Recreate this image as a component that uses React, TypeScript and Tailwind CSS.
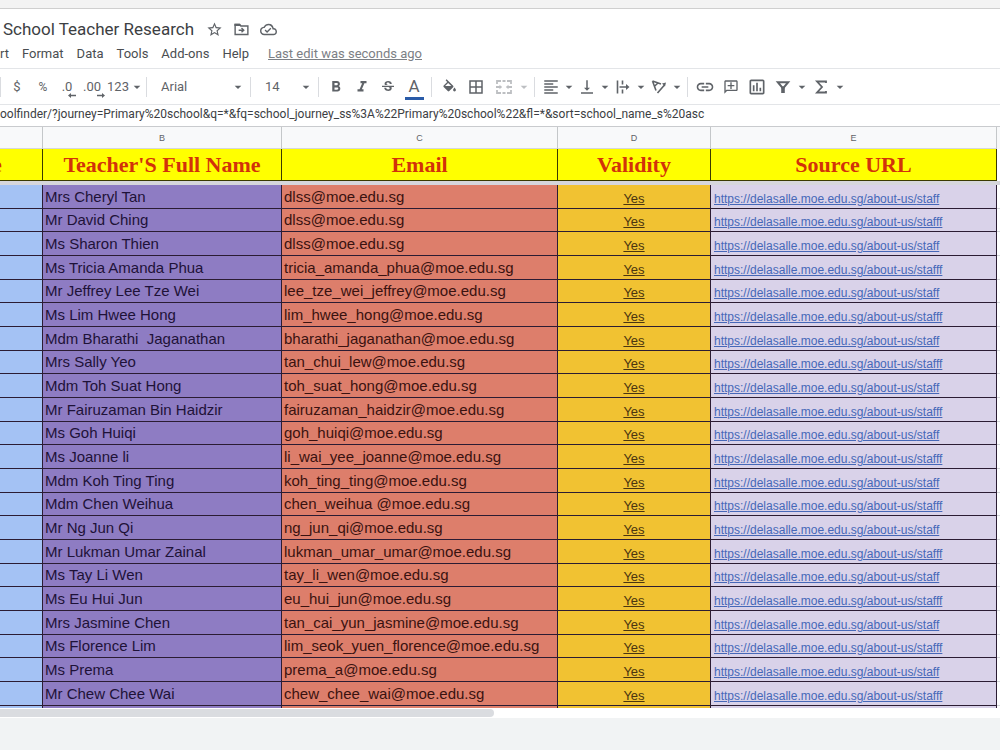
import type { ReactNode } from "react";
import {
  MdArrowDropDown,
  MdBorderAll,
  MdFormatAlignLeft,
  MdFormatBold,
  MdFormatItalic,
  MdInsertLink,
  MdOutlineAddComment,
  MdOutlineCloudDone,
  MdOutlineInsertChart,
  MdStarBorder,
  MdStrikethroughS,
  MdVerticalAlignBottom,
} from "react-icons/md";

const teachers: [string, string][] = [
  ["Mrs Cheryl Tan", "dlss@moe.edu.sg"],
  ["Mr David Ching", "dlss@moe.edu.sg"],
  ["Ms Sharon Thien", "dlss@moe.edu.sg"],
  ["Ms Tricia Amanda Phua", "tricia_amanda_phua@moe.edu.sg"],
  ["Mr Jeffrey Lee Tze Wei", "lee_tze_wei_jeffrey@moe.edu.sg"],
  ["Ms Lim Hwee Hong", "lim_hwee_hong@moe.edu.sg"],
  ["Mdm Bharathi  Jaganathan", "bharathi_jaganathan@moe.edu.sg"],
  ["Mrs Sally Yeo", "tan_chui_lew@moe.edu.sg"],
  ["Mdm Toh Suat Hong", "toh_suat_hong@moe.edu.sg"],
  ["Mr Fairuzaman Bin Haidzir", "fairuzaman_haidzir@moe.edu.sg"],
  ["Ms Goh Huiqi", "goh_huiqi@moe.edu.sg"],
  ["Ms Joanne li", "li_wai_yee_joanne@moe.edu.sg"],
  ["Mdm Koh Ting Ting", "koh_ting_ting@moe.edu.sg"],
  ["Mdm Chen Weihua", "chen_weihua @moe.edu.sg"],
  ["Mr Ng Jun Qi", "ng_jun_qi@moe.edu.sg"],
  ["Mr Lukman Umar Zainal", "lukman_umar_umar@moe.edu.sg"],
  ["Ms Tay Li Wen", "tay_li_wen@moe.edu.sg"],
  ["Ms Eu Hui Jun", "eu_hui_jun@moe.edu.sg"],
  ["Mrs Jasmine Chen", "tan_cai_yun_jasmine@moe.edu.sg"],
  ["Ms Florence Lim", "lim_seok_yuen_florence@moe.edu.sg"],
  ["Ms Prema", "prema_a@moe.edu.sg"],
  ["Mr Chew Chee Wai", "chew_chee_wai@moe.edu.sg"],
];

const menus = ["rt", "Format", "Data", "Tools", "Add-ons", "Help"];

function Tool({ label, width = "w-[26px]", children }: { label: string; width?: string; children: ReactNode }) {
  return (
    <button type="button" aria-label={label} className={`flex h-7 shrink-0 items-center justify-center ${width}`}>
      {children}
    </button>
  );
}

function Caret() {
  return <MdArrowDropDown className="size-4 shrink-0" />;
}

function More({ label }: { label: string }) {
  return (
    <Tool label={label} width="w-3">
      <Caret />
    </Tool>
  );
}

function Divider() {
  return <div className="mx-1 h-5 w-px shrink-0 bg-[#dadce0]" />;
}

function FolderMoveIcon() {
  return (
    <svg viewBox="0 0 24 24" className="size-[17px]" fill="none" stroke="currentColor" strokeWidth="2">
      <path d="M3 5h6l2 2h10v12H3z" />
      <path d="M2 4h8l2 3H2z" fill="currentColor" stroke="none" />
      <path d="M8 13h7M12 10l3.200 3-3.200 3" />
    </svg>
  );
}

function FillIcon() {
  return (
    <svg viewBox="0 0 18 18" className="size-4" fill="currentColor">
      <path d="M5.200 1.300l1.100-1.100 7.400 7.400c.5.500.5 1.100 0 1.600l-4.400 4.400c-.5.500-1.200.5-1.700 0L3 9c-.5-.5-.5-1.100 0-1.600l4-4zM8 4.500L4.600 8h7z" />
      <path d="M15.200 9.500s-1.600 1.900-1.600 3a1.600 1.600 0 0 0 3.200 0c0-1.100-1.600-3-1.600-3z" />
    </svg>
  );
}

function MergeIcon() {
  return (
    <svg viewBox="0 0 18 18" className="size-[18px]" fill="none" stroke="currentColor" strokeWidth="1.800">
      <path d="M2 6V3h4M7.500 3h3M12 3h4v3M2 12v3h4M7.500 15h3M12 15h4v-3M1 9h5M17 9h-5" />
      <path d="M4.500 6.800L7.200 9l-2.700 2.200zM13.500 6.800L10.800 9l2.700 2.200z" fill="currentColor" stroke="none" />
    </svg>
  );
}

function WrapIcon() {
  return (
    <svg viewBox="0 0 18 18" className="size-[18px]" fill="none" stroke="currentColor" strokeWidth="1.600">
      <path d="M3.500 2.500v13M8.500 2.500v4M8.500 11.500v4M5.500 9h7.500" />
      <path d="M12 6l3.500 3-3.500 3z" fill="currentColor" stroke="none" />
    </svg>
  );
}

function RotateIcon() {
  return (
    <svg viewBox="0 0 18 18" className="size-[18px]" fill="none" stroke="currentColor" strokeWidth="1.600">
      <path d="M2.500 3l3.500 9.500M2.500 3l8.500 3M4.200 8.500L8 5M7.500 15l7-8" />
      <path d="M12 5.500l4-1-1 4z" fill="currentColor" stroke="none" />
    </svg>
  );
}

function FilterIcon() {
  return (
    <svg viewBox="0 0 18 18" className="size-[18px]" fill="none" stroke="currentColor" strokeWidth="2">
      <path d="M3.800 4.200h10.400L9 10.500z" />
      <path d="M7.200 8.500h3.600V15H7.200z" fill="currentColor" stroke="none" />
    </svg>
  );
}

function SigmaIcon() {
  return (
    <svg viewBox="0 0 18 18" className="size-[18px]" fill="none" stroke="currentColor" strokeWidth="1.800">
      <path d="M14 5V3.500H5L10 9l-5 5.500h9V13" />
    </svg>
  );
}

function DecimalIcon({ digits, direction }: { digits: string; direction: "left" | "right" }) {
  return (
    <span className="flex flex-col items-end pt-1 text-[13px] leading-[14px]">
      {digits}
      <svg viewBox="0 0 8 5" className="-mt-px -mr-1 h-[5px] w-2" fill="currentColor">
        {direction === "left" ? (
          <path d="M0 2.500L3 0v1.800h5v1.400H3V5z" />
        ) : (
          <path d="M8 2.500L5 0v1.800H0v1.400h5V5z" />
        )}
      </svg>
    </span>
  );
}

function Toolbar() {
  return (
    <div className="flex h-[35px] items-center overflow-hidden pt-px text-[13px] text-[#5f6368]">
      <div className="mr-[3px] h-5 w-px bg-[#dadce0]" />
      <Tool label="Currency">$</Tool>
      <Tool label="Percent"><span className="text-[12px]">%</span></Tool>
      <Tool label="Fewer decimals" width="w-[22px]">
        <DecimalIcon digits=".0" direction="left" />
      </Tool>
      <Tool label="More decimals" width="w-7">
        <DecimalIcon digits=".00" direction="right" />
      </Tool>
      <Tool label="Number formats" width="w-9">
        <span className="pl-1">123</span>
        <Caret />
      </Tool>
      <Divider />
      <label className="flex w-[95px] shrink-0 items-center pl-[10px]">
        <select aria-label="Font" className="w-full appearance-none bg-transparent outline-none">
          <option>Arial</option>
        </select>
        <Caret />
      </label>
      <Divider />
      <label className="flex w-[59px] shrink-0 items-center pl-[10px]">
        <select aria-label="Font size" className="w-full appearance-none bg-transparent outline-none">
          <option>14</option>
        </select>
        <Caret />
      </label>
      <Divider />
      <Tool label="Bold"><MdFormatBold className="size-[18px]" /></Tool>
      <Tool label="Italic"><MdFormatItalic className="size-[18px]" /></Tool>
      <Tool label="Strikethrough"><MdStrikethroughS className="size-4" /></Tool>
      <Tool label="Text colour">
        <span className="mt-1 flex h-[22px] w-[19px] items-start justify-center border-b-3 border-[#2a5ba8] text-[17px] leading-[17px]">
          A
        </span>
      </Tool>
      <Divider />
      <Tool label="Fill colour"><FillIcon /></Tool>
      <Tool label="Borders" width="w-7"><MdBorderAll className="size-[18px]" /></Tool>
      <div className="flex text-[#bdbfc2]">
        <Tool label="Merge cells" width="w-7"><MergeIcon /></Tool>
        <More label="Merge type" />
      </div>
      <Divider />
      <Tool label="Horizontal align" width="w-6"><MdFormatAlignLeft className="size-[18px]" /></Tool>
      <More label="Horizontal options" />
      <Tool label="Vertical align" width="w-6"><MdVerticalAlignBottom className="size-[18px]" /></Tool>
      <More label="Vertical options" />
      <Tool label="Text wrapping" width="w-6"><WrapIcon /></Tool>
      <More label="Wrapping options" />
      <Tool label="Text rotation" width="w-6"><RotateIcon /></Tool>
      <More label="Rotation options" />
      <Divider />
      <Tool label="Insert link"><MdInsertLink className="size-[20px]" /></Tool>
      <Tool label="Insert comment"><MdOutlineAddComment className="size-4 -scale-x-100" /></Tool>
      <Tool label="Insert chart"><MdOutlineInsertChart className="size-[20px]" /></Tool>
      <Tool label="Filter"><FilterIcon /></Tool>
      <More label="Filter views" />
      <Tool label="Functions"><SigmaIcon /></Tool>
      <More label="More functions" />
    </div>
  );
}

const letterCell = "border-r border-b border-r-[#c4c7c9] border-b-[#d5d7da] p-0 text-[9px] font-normal leading-[12px]";
const titleCell = "border-r border-b border-[#3a3a00] p-0 whitespace-nowrap";
const gridCell = "border-r border-b border-[#2b1c33] p-0 whitespace-pre";

function Sheet() {
  return (
    <table className="w-full table-fixed border-separate border-spacing-0 bg-white font-['Liberation_Sans',Arial,sans-serif]">
      <colgroup>
        <col className="w-[43px]" />
        <col className="w-[239px]" />
        <col className="w-[276px]" />
        <col className="w-[153px]" />
        <col className="w-[286px]" />
        <col />
      </colgroup>
      <thead>
        <tr className="h-[22px] bg-[#f8f9fa] text-[#5f6368]">
          <th className={letterCell} />
          <th className={letterCell}>B</th>
          <th className={letterCell}>C</th>
          <th className={letterCell}>D</th>
          <th className={letterCell}>E</th>
          <th className="p-0" />
        </tr>
        <tr className="h-8 bg-[#ffff00] font-['Liberation_Serif','Times_New_Roman',serif] text-[22px] leading-[26px] text-[#d2320a]">
          <th className={`${titleCell} text-left`}>
            <span className="-ml-2">e</span>
          </th>
          <th className={titleCell}>Teacher'S Full Name</th>
          <th className={titleCell}>Email</th>
          <th className={titleCell}>Validity</th>
          <th className={titleCell}>Source URL</th>
          <th className="bg-white p-0" />
        </tr>
        <tr className="h-1 bg-[#d6d6dc]">
          <td colSpan={6} className="p-0" />
        </tr>
      </thead>
      <tbody>
        {teachers.map(([name, email], i) => (
          <tr key={name} className={i % 3 === 1 ? "h-[23px]" : "h-6"}>
            <td className={`${gridCell} bg-[#a4c2f4]`} />
            <td className={`${gridCell} bg-[#8e7cc3] pl-[2px] text-[15px] leading-[20px] text-[#1e1238]`}>{name}</td>
            <td className={`${gridCell} bg-[#dd7e6b] pl-[2px] text-[15px] leading-[20px] text-[#3a1210]`}>{email}</td>
            <td className={`${gridCell} bg-[#f1c232] text-center align-bottom text-[13px] leading-[18px] text-[#4a3510] underline`}>
              Yes
            </td>
            <td className={`${gridCell} bg-[#d9d2e9] pl-[3px] align-bottom text-[12px] leading-[18px]`}>
              <a href="#source" className="text-[#4668b8] underline">
                https://delasalle.moe.edu.sg/about-us/{i % 2 ? "stafff" : "staff"}
              </a>
            </td>
            <td className="border-b border-[#d5d7da] p-0" />
          </tr>
        ))}
        <tr className="h-[2px]">
          <td className="border-r border-[#2b1c33] bg-[#a4c2f4] p-0" />
          <td className="border-r border-[#2b1c33] bg-[#8e7cc3] p-0" />
          <td className="border-r border-[#2b1c33] bg-[#dd7e6b] p-0" />
          <td className="border-r border-[#2b1c33] bg-[#f1c232] p-0" />
          <td className="border-r border-[#2b1c33] bg-[#d9d2e9] p-0" />
          <td className="p-0" />
        </tr>
      </tbody>
    </table>
  );
}

export default function App() {
  return (
    <div className="flex min-h-screen flex-col overflow-hidden bg-[#f1f3f4] font-[Roboto,sans-serif]">
      <div className="h-[9px] border-b border-[#cfcfcf] bg-[#f3f3f3]" />
      <header className="bg-white">
        <div className="flex h-10 items-center pl-[3px] text-[#5f6368]">
          <h1 className="text-[17px] leading-6 text-[#3c4043]">School Teacher Research</h1>
          <div className="ml-3 flex gap-[10px]">
            <button type="button" aria-label="Star"><MdStarBorder className="size-[17px]" /></button>
            <button type="button" aria-label="Move"><FolderMoveIcon /></button>
            <button type="button" aria-label="Saved to Drive"><MdOutlineCloudDone className="size-[17px]" /></button>
          </div>
        </div>
        <nav className="flex h-5 items-start gap-[13px] border-b border-[#e3e5e8] text-[13px] leading-[10px] text-[#4a4d51]">
          {menus.map((item) => (
            <button key={item} type="button">{item}</button>
          ))}
          <a href="#history" className="ml-[6px] text-[#7c8085] underline">Last edit was seconds ago</a>
        </nav>
        <Toolbar />
        <div className="flex h-[23px] items-start border-t border-b border-t-[#e3e5e8] border-b-[#c9cbce]">
          <input
            aria-label="Formula"
            className="h-[18px] w-full bg-transparent text-[12px] leading-[18px] text-[#3c4043] outline-none"
            defaultValue="oolfinder/?journey=Primary%20school&q=*&fq=school_journey_ss%3A%22Primary%20school%22&fl=*&sort=school_name_s%20asc"
          />
        </div>
      </header>
      <Sheet />
      <div className="h-[10px] bg-white pt-px">
        <div className="h-2 w-[49.4%] rounded-r-full bg-[#dadce0]" />
      </div>
    </div>
  );
}
